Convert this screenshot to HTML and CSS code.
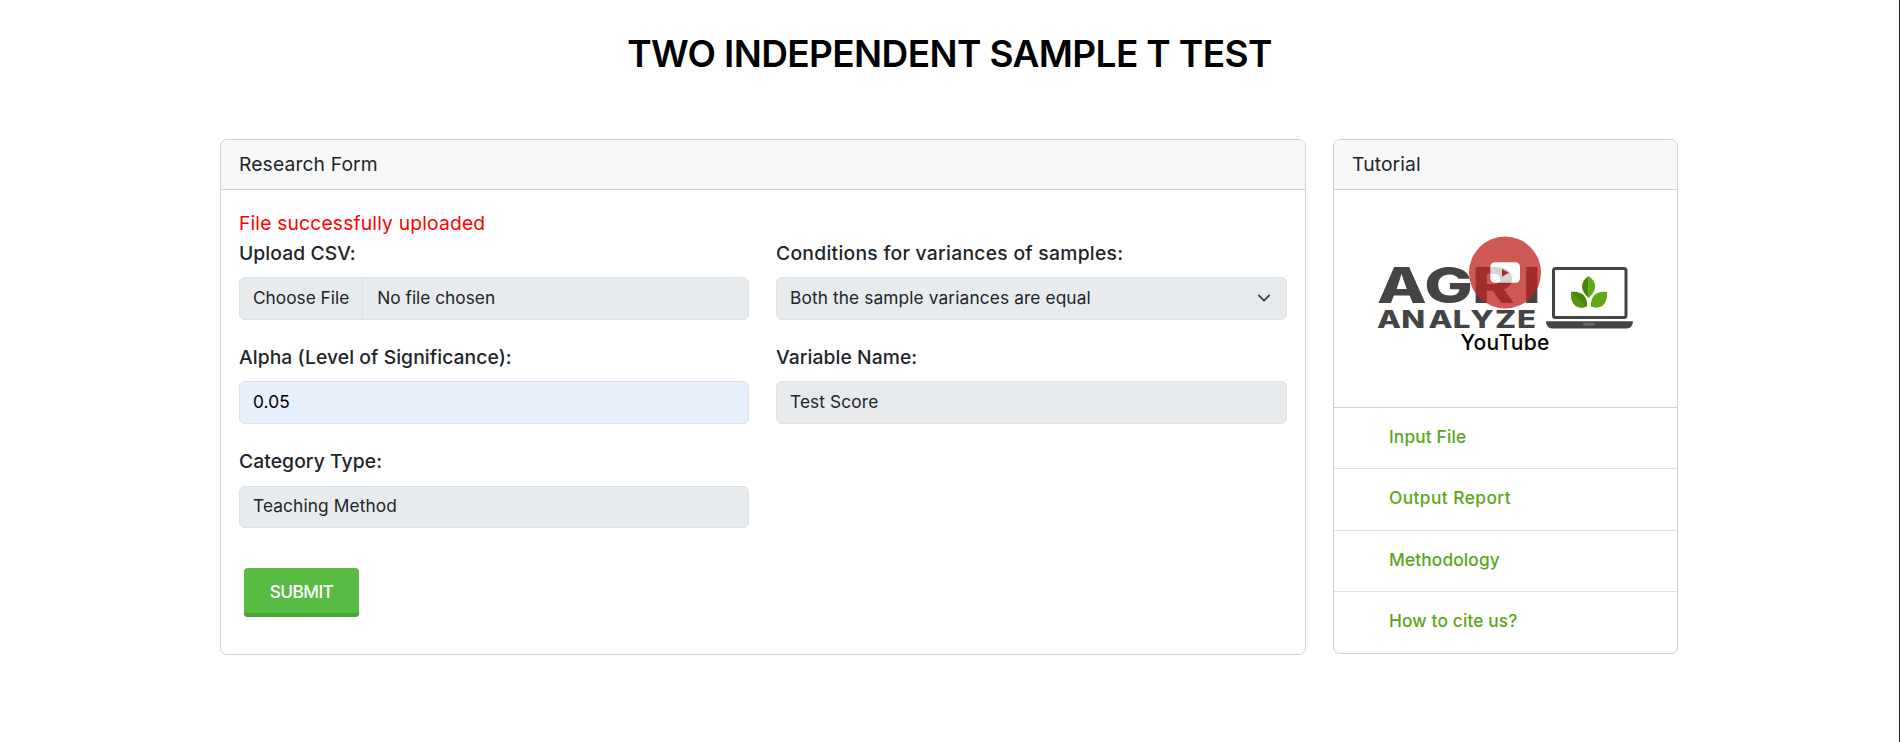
FILE: index.html
```html
<!DOCTYPE html>
<html lang="en">
<head>
    <meta charset="UTF-8">
    <meta name="viewport" content="width=device-width, initial-scale=1.0">
    <title>Two Independent Sample T Test</title>
    <link rel="stylesheet" href="styles.css">
</head>
<body>

<h1 class="title">TWO INDEPENDENT SAMPLE T TEST</h1>

<div class="container">
    <div class="card form-card">
        <div class="card-header">Research Form</div>
        <form class="card-body">
            <div class="message">File successfully uploaded</div>
            <div class="fields">
                <div class="field">
                    <label>Upload CSV:</label>
                    <div class="control file">
                        <div class="file-button">Choose File</div>
                        <span>No file chosen</span>
                    </div>
                </div>
                <div class="field">
                    <label class="wide">Conditions for variances of samples:</label>
                    <div class="control select">
                        <span>Both the sample variances are equal</span>
                        <svg width="14" height="14" viewBox="0 0 16 16"><path d="m2 5 6 6 6-6" fill="none" stroke="#343a40" stroke-width="2" stroke-linecap="round" stroke-linejoin="round"/></svg>
                    </div>
                </div>
                <div class="field">
                    <label>Alpha (Level of Significance):</label>
                    <div class="control filled">0.05</div>
                </div>
                <div class="field">
                    <label>Variable Name:</label>
                    <div class="control">Test Score</div>
                </div>
                <div class="field">
                    <label>Category Type:</label>
                    <div class="control">Teaching Method</div>
                </div>
            </div>
            <button type="button" class="submit">SUBMIT</button>
        </form>
    </div>

    <div class="card tutorial-card">
        <div class="card-header">Tutorial</div>
        <div class="video">
            <svg width="259" height="120" viewBox="0 0 259 120">
                <g class="logo-text">
                    <text transform="scale(1.32 1)" x="0.8 36.5 72.8 111" y="68.500" font-size="49">AGRI</text>
                    <text transform="scale(1.3 1)" x="0.8 19.5 40.300 59 72.500 91.500 108.500" y="93.300" font-size="24">ANALYZE</text>
                </g>
                <!-- laptop -->
                <rect x="177.5" y="33.5" width="72.5" height="49" rx="2" fill="#fff" stroke="#444" stroke-width="3"/>
                <path d="M170 86.3h87c0 4-2.5 7.2-6 7.2h-75c-3.5 0-6-3.2-6-7.2z" fill="#444"/>
                <rect x="207" y="87.8" width="12" height="3" rx="1" fill="#666"/>
                <!-- leaves -->
                <path d="M212.6 41c8.5 6 9 14 0 22z" fill="#5fa912"/>
                <path d="M212.6 41c-8.5 6-9 14 0 22z" fill="#468605"/>
                <path d="M195 57c9-1.5 17 3 16 14.5c-10 4-17-3-16-14.5z" fill="#468605"/>
                <path d="M195 57l16 14.5c-10 4-17-3-16-14.5z" fill="#55980f"/>
                <path d="M231 57c-9-1.5-17 3-16 14.5c10 4 17-3 16-14.5z" fill="#5fa912"/>
                <!-- play button -->
                <g opacity="0.77">
                    <circle cx="129" cy="37.6" r="36" fill="#c12622"/>
                    <rect x="114.3" y="27.3" width="29.7" height="20.5" rx="4.5" fill="#fff"/>
                    <path d="M126 34l7 3.700l-7 3.800z" fill="#c12622"/>
                </g>
                <text class="youtube" x="84.5" y="115" textLength="89">YouTube</text>
            </svg>
        </div>
        <ul class="links">
            <li><a href="#">Input File</a></li>
            <li><a href="#" class="wide">Output Report</a></li>
            <li><a href="#">Methodology</a></li>
            <li><a href="#">How to cite us?</a></li>
        </ul>
    </div>
</div>

</body>
</html>
```
FILE: styles.css
```css
body {
    font-family: 'Inter', sans-serif;
    font-size: 19.3px;
    line-height: 30px;
    letter-spacing: 0.12px;
    color: #212529;
    background-color: #fff;
    margin: 0;
    border-right: 1px solid #222;
    height: 742px;
    box-sizing: border-box;
    overflow: hidden;
}

.title {
    margin: 0;
    padding-top: 24px;
    height: 115px;
    font-size: 37px;
    line-height: 60px;
    font-weight: 600;
    letter-spacing: -0.62px;
    color: #000;
    text-align: center;
}

.container {
    display: flex;
    align-items: flex-start;
    gap: 27px;
    padding-left: 220px;
}

.card {
    border: 1px solid #d2d2d2;
    border-radius: 7px;
    box-sizing: border-box;
    overflow: hidden;
}

.form-card {
    width: 1086px;
    height: 516px;
}

.tutorial-card {
    width: 345px;
    height: 515px;
}

.card-header {
    height: 49px;
    line-height: 49px;
    padding: 0 18px;
    background-color: #f8f8f8;
    border-bottom: 1px solid #d2d2d2;
}

.card-body {
    padding: 18px;
}

.message {
    color: #ff0000;
    letter-spacing: 0.16px;
}

.fields {
    display: grid;
    grid-template-columns: 510px 511px;
    column-gap: 27px;
    row-gap: 22.3px;
}

label {
    display: block;
    font-weight: 450;
    letter-spacing: 0.08px;
    margin-bottom: 9.2px;
}

label.wide {
    letter-spacing: 0.28px;
}

.control {
    display: flex;
    align-items: center;
    box-sizing: border-box;
    height: 42.7px;
    padding: 0 13px 2px;
    font-size: 17.3px;
    background-color: #e7ebee;
    border: 1px solid #dee2e6;
    border-radius: 6px;
}

.filled {
    background-color: #e8f0fe;
    color: #000;
}

.file {
    padding-bottom: 0;
    letter-spacing: 0;
}

.file span {
    padding-bottom: 2px;
}

.file-button {
    align-self: stretch;
    display: flex;
    align-items: center;
    padding-right: 13px;
    padding-bottom: 2px;
    margin-right: 14px;
    border-right: 1px solid #dee2e6;
}

.select {
    justify-content: space-between;
    padding-right: 15px;
}

.submit {
    display: block;
    width: 115px;
    height: 49px;
    margin: 40px 0 0 5px;
    padding: 0 0 3px;
    font-family: inherit;
    font-size: 17.3px;
    font-weight: 500;
    letter-spacing: -0.6px;
    color: #fff;
    background-color: #58bb43;
    border: none;
    border-radius: 4px;
    box-shadow: inset 0 -4px 0 #4ba235;
}

.video {
    height: 217px;
    border-bottom: 1px solid #d2d2d2;
    display: flex;
    justify-content: center;
}

.video svg {
    margin-top: 45px;
}

.logo-text {
    font-weight: 800;
    fill: #444;
}

.youtube {
    font-size: 21px;
    font-weight: 500;
    fill: #000;
}

.links {
    list-style: none;
    margin: 0;
    padding: 0;
}

.links li {
    box-sizing: border-box;
    height: 61.4px;
    padding: 13px 0 0 55px;
    border-bottom: 1px solid #dee2e6;
}

.links a {
    font-size: 17.3px;
    font-weight: 500;
    letter-spacing: 0.15px;
    color: #5aa618;
    text-decoration: none;
}

.links a.wide {
    letter-spacing: 0.45px;
}
```
